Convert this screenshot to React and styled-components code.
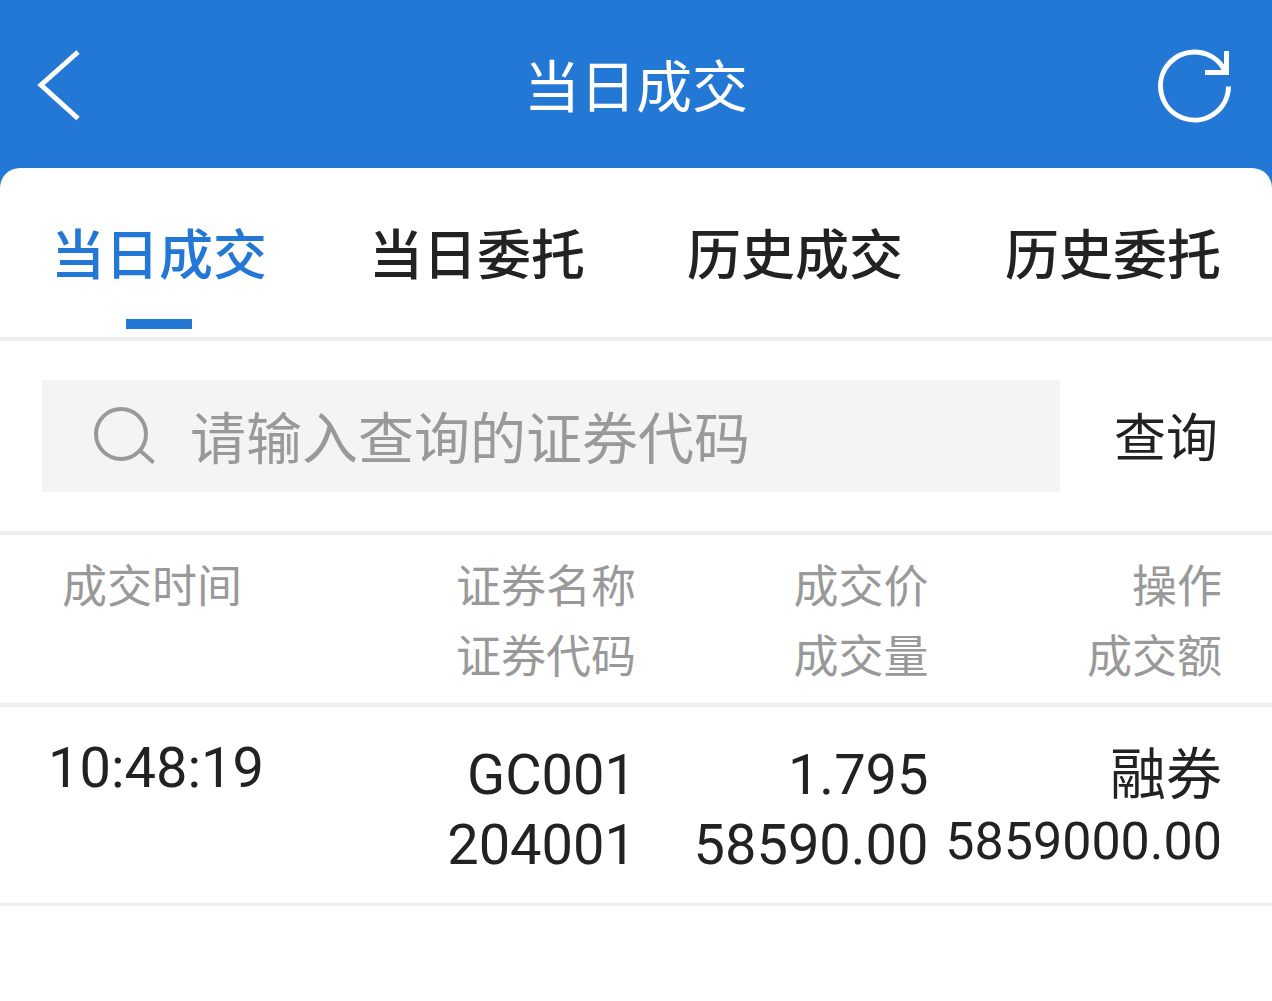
import React, { useState } from 'react'
import styled, { createGlobalStyle } from 'styled-components'

const GlobalStyle = createGlobalStyle`
	* {
		box-sizing: border-box;
	}

	body {
		margin: 0;
		background: #fff;
		color: #222;
		font-family: 'Noto Sans CJK SC', sans-serif;
	}

	button,
	input {
		margin: 0;
		padding: 0;
		border: none;
		background: none;
		color: inherit;
		font-family: inherit;
	}

	button {
		cursor: pointer;
	}
`

// header
const Header = styled.header`
	display: flex;
	align-items: center;
	justify-content: space-between;
	height: 168px;
	padding: 0 36px 2px;
	background: #2478d5;
	color: #fff;
`

const Title = styled.h1`
	margin: 0;
	font-size: 56px;
	font-weight: 400;
	line-height: 80px;
`

const IconButton = styled.button`
	display: flex;
	width: 80px;
	height: 80px;
`

// tabs
const TabsBackground = styled.div`
	background: #2478d5;
`

const Tabs = styled.nav`
	display: flex;
	height: 173px;
	border-bottom: 4px solid #eee;
	border-radius: 20px 20px 0 0;
	background: #fff;
`

const Tab = styled.button`
	display: flex;
	flex: 1;
	flex-direction: column;
	align-items: center;
	justify-content: space-between;
	padding: 44px 0 8px;
	color: ${({ $active }) => ($active ? '#2478d5' : '#222')};
	font-size: 54px;
	font-weight: 500;
	line-height: 80px;

	&::after {
		content: '';
		width: 66px;
		height: 10px;
		background: ${({ $active }) => ($active ? '#2478d5' : 'transparent')};
	}
`

// search
const SearchForm = styled.form`
	display: flex;
	padding: 39px 0 39px 42px;
	border-bottom: 4px solid #eee;
`

const SearchBox = styled.label`
	display: flex;
	flex: 1;
	align-items: center;
	gap: 30px;
	height: 112px;
	padding-left: 48px;
	background: #f4f4f4;
	color: #999;
`

const SearchInput = styled.input`
	flex: 1;
	min-width: 0;
	height: 112px;
	padding-bottom: 4px;
	outline: none;
	font-size: 56px;

	&::placeholder {
		color: #999;
		opacity: 1;
	}
`

const SearchButton = styled.button`
	width: 212px;
	padding-bottom: 4px;
	font-size: 52px;
`

// deals table
const Table = styled.table`
	width: 100%;
	border-collapse: collapse;
	table-layout: fixed;
`

const Col = styled.col`
	width: ${({ $width }) => $width};
`

const HeadCell = styled.th`
	padding: 14px 0;
	border-bottom: 4px solid #eee;
	color: #999;
	font-size: 45px;
	font-weight: 400;
	line-height: 70px;
	text-align: right;
	vertical-align: top;
	white-space: nowrap;

	&:first-child {
		padding-left: 62px;
		text-align: left;
	}

	&:last-child {
		padding-right: 50px;
	}
`

const Cell = styled.td`
	padding: 33px 0 23px;
	border-bottom: 3px solid #eee;
	font-family: Roboto, 'Noto Sans CJK SC', sans-serif;
	font-size: 56px;
	line-height: 70px;
	text-align: right;
	vertical-align: top;
	white-space: nowrap;

	&:first-child {
		padding-left: 48px;
		line-height: 56px;
		text-align: left;
	}

	&:last-child {
		padding-right: 50px;
	}
`

const Line = styled.div``

const AmountLine = styled(Line)`
	font-size: 52px;
	line-height: 64px;
`

const BackIcon = () => (
	<svg width="80" height="80" viewBox="0 0 80 80" fill="none" stroke="currentColor" strokeWidth="5" aria-hidden="true">
		<path d="M42 9 5 42 42 75.500" />
	</svg>
)

const RefreshIcon = () => (
	<svg width="80" height="80" viewBox="0 0 80 80" fill="none" stroke="currentColor" strokeWidth="5" aria-hidden="true">
		<path d="M68.500 27A34 34 0 1 0 72.500 43.500" />
		<path d="M70.500 8V29.500H49" />
	</svg>
)

const SearchIcon = () => (
	<svg width="70" height="70" viewBox="0 0 70 70" fill="none" stroke="currentColor" strokeWidth="4" aria-hidden="true">
		<circle cx="31" cy="33" r="25" />
		<path d="M50 49.500 63.500 61.500" />
	</svg>
)

const tabs = ['当日成交', '当日委托', '历史成交', '历史委托']

const deals = [
	{
		time: '10:48:19',
		name: 'GC001',
		code: '204001',
		price: '1.795',
		volume: '58590.00',
		action: '融券',
		amount: '5859000.00',
	},
]

const App = () => {
	const [active, setActive] = useState(tabs[0])
	const [code, setCode] = useState('')

	return (
		<>
			<GlobalStyle />
			<Header>
				<IconButton type="button" aria-label="返回">
					<BackIcon />
				</IconButton>
				<Title>当日成交</Title>
				<IconButton type="button" aria-label="刷新">
					<RefreshIcon />
				</IconButton>
			</Header>
			<TabsBackground>
				<Tabs>
					{tabs.map((tab) => (
						<Tab key={tab} type="button" $active={tab === active} onClick={() => setActive(tab)}>
							{tab}
						</Tab>
					))}
				</Tabs>
			</TabsBackground>
			<SearchForm onSubmit={(e) => e.preventDefault()}>
				<SearchBox>
					<SearchIcon />
					<SearchInput
						aria-label="证券代码"
						placeholder="请输入查询的证券代码"
						value={code}
						onChange={(e) => setCode(e.target.value)}
					/>
				</SearchBox>
				<SearchButton type="submit">查询</SearchButton>
			</SearchForm>
			<Table>
				<colgroup>
					<Col $width="25%" />
					<Col $width="25%" />
					<Col $width="23%" />
					<Col $width="27%" />
				</colgroup>
				<thead>
					<tr>
						<HeadCell>成交时间</HeadCell>
						<HeadCell>
							<Line>证券名称</Line>
							<Line>证券代码</Line>
						</HeadCell>
						<HeadCell>
							<Line>成交价</Line>
							<Line>成交量</Line>
						</HeadCell>
						<HeadCell>
							<Line>操作</Line>
							<Line>成交额</Line>
						</HeadCell>
					</tr>
				</thead>
				<tbody>
					{deals.map((deal) => (
						<tr key={deal.time}>
							<Cell>{deal.time}</Cell>
							<Cell>
								<Line>{deal.name}</Line>
								<Line>{deal.code}</Line>
							</Cell>
							<Cell>
								<Line>{deal.price}</Line>
								<Line>{deal.volume}</Line>
							</Cell>
							<Cell>
								<Line>{deal.action}</Line>
								<AmountLine>{deal.amount}</AmountLine>
							</Cell>
						</tr>
					))}
				</tbody>
			</Table>
		</>
	)
}

export default App
